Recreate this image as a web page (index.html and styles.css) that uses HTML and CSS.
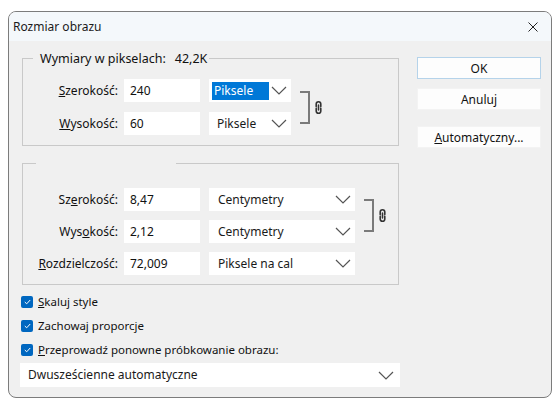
FILE: index.html
```html
<!DOCTYPE html>
<html lang="pl">

<head>
    <meta charset="UTF-8">
    <title>Rozmiar obrazu</title>
    <link rel="stylesheet" href="styles.css">
</head>

<body>
    <div class="window">
        <div class="titlebar">
            <span class="title">Rozmiar obrazu</span>
            <svg class="close" width="10" height="10" viewBox="0 0 10 10">
                <path d="M0.5 0.5L9.5 9.5M9.5 0.5L0.5 9.5" stroke="#222" stroke-width="1" fill="none"/>
            </svg>
        </div>

        <div class="content">
            <div class="left">
                <fieldset class="group group-px">
                    <legend><span>Wymiary w pikselach:</span><span class="legend-value">42,2K</span></legend>
                    <div class="rows rows-px">
                        <label class="row-label"><u>S</u>zerokość:</label>
                        <div class="input">240</div>
                        <div class="select"><span class="sel-text highlight">Piksele</span>
                            <svg class="chev" width="16" height="9" viewBox="0 0 16 9"><path d="M1 1L8 8L15 1" stroke="#555" stroke-width="1.2" fill="none"/></svg>
                        </div>
                        <div class="link">
                            <div class="bracket"></div>
                            <svg class="chain" width="9" height="15" viewBox="0 0 9 15"><path d="M2.2 6.6V4a2.3 2.3 0 0 1 4.6 0v2.6M2.2 8.4V11a2.3 2.3 0 0 0 4.6 0V8.4M4.5 5v5" stroke="#333" stroke-width="1.6" fill="none" stroke-linecap="round"/></svg>
                        </div>

                        <label class="row-label"><u>W</u>ysokość:</label>
                        <div class="input">60</div>
                        <div class="select"><span class="sel-text">Piksele</span>
                            <svg class="chev" width="16" height="9" viewBox="0 0 16 9"><path d="M1 1L8 8L15 1" stroke="#555" stroke-width="1.2" fill="none"/></svg>
                        </div>
                    </div>
                </fieldset>

                <fieldset class="group group-doc">
                    <legend class="blank"></legend>
                    <div class="rows rows-doc">
                        <label class="row-label">Sz<u>e</u>rokość:</label>
                        <div class="input">8,47</div>
                        <div class="select"><span class="sel-text">Centymetry</span>
                            <svg class="chev" width="16" height="9" viewBox="0 0 16 9"><path d="M1 1L8 8L15 1" stroke="#555" stroke-width="1.2" fill="none"/></svg>
                        </div>
                        <div class="link">
                            <div class="bracket"></div>
                            <svg class="chain" width="9" height="15" viewBox="0 0 9 15"><path d="M2.2 6.6V4a2.3 2.3 0 0 1 4.6 0v2.6M2.2 8.4V11a2.3 2.3 0 0 0 4.6 0V8.4M4.5 5v5" stroke="#333" stroke-width="1.6" fill="none" stroke-linecap="round"/></svg>
                        </div>

                        <label class="row-label">Wys<u>o</u>kość:</label>
                        <div class="input">2,12</div>
                        <div class="select"><span class="sel-text">Centymetry</span>
                            <svg class="chev" width="16" height="9" viewBox="0 0 16 9"><path d="M1 1L8 8L15 1" stroke="#555" stroke-width="1.2" fill="none"/></svg>
                        </div>

                        <label class="row-label"><u>R</u>ozdzielczość:</label>
                        <div class="input">72,009</div>
                        <div class="select"><span class="sel-text">Piksele na cal</span>
                            <svg class="chev" width="16" height="9" viewBox="0 0 16 9"><path d="M1 1L8 8L15 1" stroke="#555" stroke-width="1.2" fill="none"/></svg>
                        </div>
                    </div>
                </fieldset>

                <div class="checks">
                    <label class="check"><span class="box"><svg width="7" height="6" viewBox="0 0 7 6"><path d="M0.8 3L2.7 4.8L6.2 1" stroke="#fff" stroke-width="1" fill="none"/></svg></span><span><u>S</u>kaluj style</span></label>
                    <label class="check"><span class="box"><svg width="7" height="6" viewBox="0 0 7 6"><path d="M0.8 3L2.7 4.8L6.2 1" stroke="#fff" stroke-width="1" fill="none"/></svg></span><span>Zachowaj proporcje</span></label>
                    <label class="check"><span class="box"><svg width="7" height="6" viewBox="0 0 7 6"><path d="M0.8 3L2.7 4.8L6.2 1" stroke="#fff" stroke-width="1" fill="none"/></svg></span><span><u>P</u>rzeprowadź ponowne próbkowanie obrazu:</span></label>
                </div>

                <div class="select select-wide"><span class="sel-text">Dwusześcienne automatyczne</span>
                    <svg class="chev" width="16" height="9" viewBox="0 0 16 9"><path d="M1 1L8 8L15 1" stroke="#555" stroke-width="1.2" fill="none"/></svg>
                </div>
            </div>

            <div class="buttons">
                <button class="btn btn-default">OK</button>
                <button class="btn">Anuluj</button>
                <button class="btn btn-auto"><u>A</u>utomatyczny...</button>
            </div>
        </div>
    </div>
</body>

</html>
```

FILE: styles.css
```css
* {
    margin: 0;
    padding: 0;
    box-sizing: border-box;
}

body {
    background-color: #ffffff;
    font-family: "Noto Sans", "Open Sans", sans-serif;
    font-size: 12px;
    color: #111;
}

.window {
    width: 544px;
    height: 387px;
    margin: 11px 0 0 8px;
    border: 1px solid #7c7c7c;
    border-radius: 8px;
    background-color: #f0f0f0;
    overflow: hidden;
    display: flex;
    flex-direction: column;
}

.titlebar {
    height: 29px;
    background-color: #f4f8fb;
    display: flex;
    align-items: center;
    justify-content: space-between;
    padding: 0 13px 0 4px;
}

.title {
    font-size: 12px;
    color: #1b1b1b;
}

.content {
    flex: 1;
    display: flex;
    gap: 17px;
    padding: 9px 10px 0 11px;
}

.left {
    width: 380px;
    display: flex;
    flex-direction: column;
}

.group {
    margin: 0 1px 0 2px;
    border: 1px solid #c9c9c9;
    padding: 0;
}

.group legend {
    margin-left: 10px;
    padding: 0 2px 0 7px;
    line-height: 17px;
    font-size: 12.5px;
}

.legend-value {
    margin-left: 9px;
}

.group legend.blank {
    margin-left: 13px;
    width: 140px;
    height: 17px;
    padding: 0;
}

.group-doc {
    margin-top: 9px;
}

.rows {
    display: grid;
    grid-template-columns: 101px 85px auto 1fr;
    align-items: center;
}

.rows-px {
    padding: 12px 0 10px;
    row-gap: 10px;
}

.rows-doc {
    padding: 16px 0 9px;
    row-gap: 9px;
}

.row-label {
    text-align: right;
    padding-right: 6px;
}

.input {
    width: 76px;
    height: 23px;
    background-color: #fff;
    padding: 0 6px;
    line-height: 23px;
}

.select {
    height: 23px;
    background-color: #fff;
    display: flex;
    align-items: center;
    justify-content: space-between;
    padding: 0 2px 0 3px;
    color: #1a1a1a;
}

.rows-px .select {
    width: 82px;
}

.rows-doc .select {
    width: 146px;
}

.sel-text {
    padding: 0 3px 1px 5px;
    line-height: 17px;
}

.sel-text.highlight {
    background-color: #0078d7;
    color: #fff;
    width: 57px;
    padding-left: 2px;
}

.rows-doc .sel-text {
    padding-left: 6px;
}

.chev {
    margin-right: 2px;
}

.link {
    grid-row: 1 / span 2;
    grid-column: 4;
    display: flex;
    align-items: center;
    gap: 4px;
    padding-left: 9px;
}

.bracket {
    width: 10px;
    height: 33px;
    border: 2px solid #7a7a7a;
    border-left: none;
}

.checks {
    display: flex;
    flex-direction: column;
    gap: 7px;
    margin-top: 8px;
    padding-left: 1px;
}

.check {
    display: flex;
    align-items: center;
    gap: 5px;
    line-height: 17px;
    font-size: 11.5px;
}

.box {
    width: 12px;
    height: 12px;
    border-radius: 2px;
    background-color: #0067c0;
    display: flex;
    align-items: center;
    justify-content: center;
}

.select-wide {
    margin-top: 5px;
    height: 24px;
    padding: 0 4px 0 5px;
}

.select-wide .sel-text {
    padding-left: 3px;
}

.buttons {
    width: 124px;
    display: flex;
    flex-direction: column;
    padding-top: 7px;
}

.btn {
    height: 22px;
    background-color: #fdfdfd;
    border: 1px solid #f3f3f3;
    font-family: inherit;
    font-size: 12px;
    color: #111;
}

.btn-default {
    border-color: #b5d3ea;
}

.btn + .btn {
    margin-top: 9px;
}

.btn-auto {
    margin-top: 16px !important;
}
```
